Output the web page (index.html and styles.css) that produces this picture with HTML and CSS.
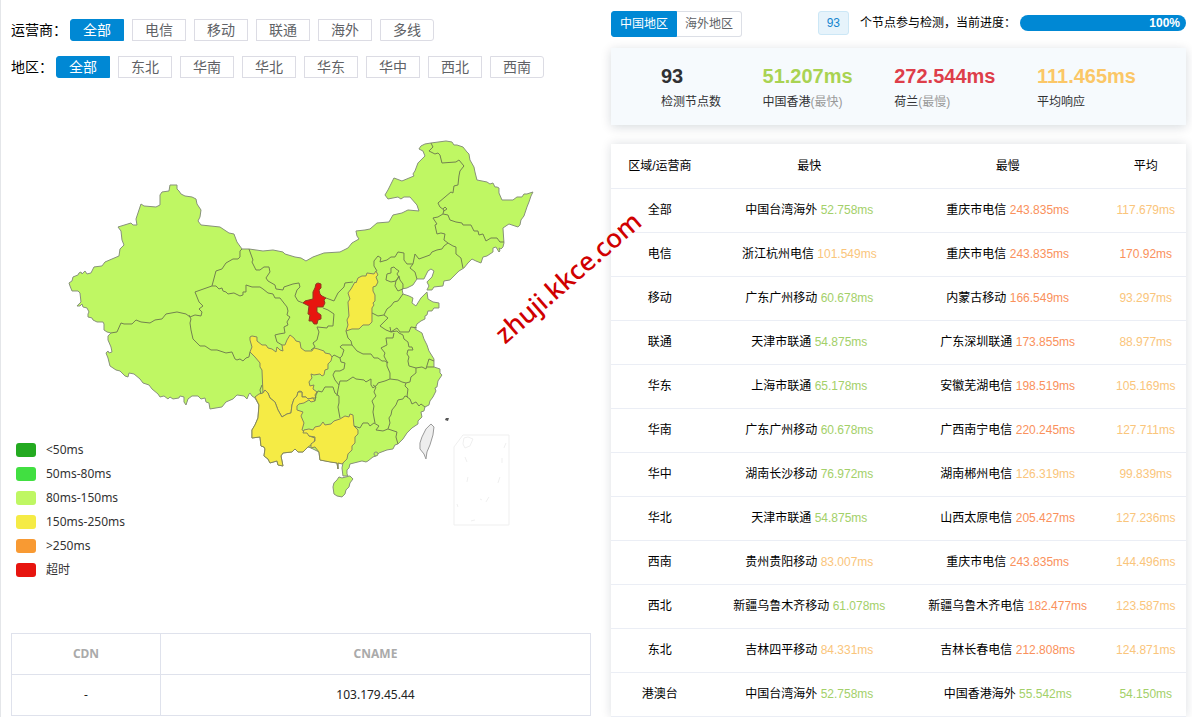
FILE: index.html
```html
<!DOCTYPE html>
<html lang="zh-CN">
<head>
<meta charset="utf-8">
<title>节点检测</title>
<link rel="stylesheet" href="styles.css">
</head>
<body>
<main class="page">
  <section class="left">
    <div class="filter"><span class="filter-label">运营商：</span>
      <div class="options"><button class="option active">全部</button><button class="option">电信</button><button class="option">移动</button><button class="option">联通</button><button class="option">海外</button><button class="option">多线</button></div>
    </div>
    <div class="filter"><span class="filter-label">地区：</span>
      <div class="options"><button class="option active">全部</button><button class="option">东北</button><button class="option">华南</button><button class="option">华北</button><button class="option">华东</button><button class="option">华中</button><button class="option">西北</button><button class="option">西南</button></div>
    </div>
    <div class="map">
      <svg class="map-svg" viewBox="11 78 580 555" role="img" aria-label="中国地图">
        <!-- mainland -->
        <path class="land" d="M69 283L72 281 73 277 78 275 79 273 81 272 82 274 85 271 87 274 91 273 94 267 102 266 105 262 119 256 120 249 122 247 124 245 122 240 121 231 118 227 131 223 133 225 137 225 136 219 141 204 144 206 156 207 160 205 160 195 162 192 169 191 170 185 177 185 177 189 179 191 181 194 185 196 192 197 196 199 197 204 201 210 200 217 198 221 201 225 220 227 229 233 234 234 237 242 242 249 249 249 263 251 273 250 283 252 285 254 295 257 301 258 306 261 313 257 324 253 340 252 348 248 352 243 359 239 357 236 356 231 365 230 370 229 377 223 389 222 393 215 402 213 408 210 419 211 417 205 410 197 404 197 401 199 398 197 393 198 388 199 385 195 388 190 394 178 402 181 414 176 413 174 415 171 418 163 421 160 425 156 423 151 419 149 421 146 425 144 431 143 446 141 452 142 454 145 457 145 463 147 467 152 469 154 470 160 474 167 475 172 477 180 487 182 490 184 493 183 495 187 497 187 499 188 499 193 502 200 513 200 517 197 522 197 524 194 527 194 533 192 531 196 529 202 527 207 524 216 521 220 520 225 518 227 509 224 503 228 504 243 503 247 501 249 499 248 500 251 499 252 496 247 493 248 493 252 487 256 483 257 481 263 476 261 472 259 468 263 464 268 459 271 450 280 444 281 443 286 434 287 432 290 427 290 429 286 427 282 432 277 434 271 431 269 428 271 424 279 417 279 413 285 407 288 402 289 403 294 409 296 413 298 412 303 416 306 421 298 427 292 428 299 433 302 439 303 439 308 434 308 432 311 428 311 427 315 425 316 425 319 421 321 417 324 415 329 422 333 424 339 427 345 429 351 434 359 434 367 440 369 440 373 442 375 438 381 437 387 435 388 436 391 433 397 430 401 429 405 425 407 424 411 421 412 422 417 418 421 418 424 412 428 407 433 403 439 398 444 395 445 393 449 387 450 379 453 376 456 373 457 368 461 366 462 362 461 350 464 349 468 347 470 347 474 348 476 343 476 342 468 343 463 338 463 338 469 337 463 320 460 319 452 311 448 308 447 303 452 298 452 295 449 292 452 283 453 281 456 283 466 278 465 277 461 270 463 268 459 264 456 265 449 264 447 261 446 260 437 252 438 252 430 255 425 258 418 259 405 255 398 252 396 250 393 249 394 247 399 244 396 237 395 233 399 226 402 222 407 210 409 209 403 206 402 205 398 201 399 198 396 192 396 188 399 186 405 184 402 184 397 180 396 179 398 173 399 170 397 168 399 164 396 160 397 158 394 152 389 149 385 143 383 140 379 134 374 129 373 128 377 125 376 120 371 116 370 110 366 108 358 106 353 108 351 109 353 112 352 111 347 108 340 108 336 111 333 107 332 104 330 104 324 103 322 97 322 93 320 92 318 88 317 88 314 89 312 87 308 83 307 82 304 80 306 77 306 81 302 80 293 78 291 72 291 70 286Z"/>
        <path class="land" d="M339 477L342 478 350 476 353 479 350 483 349 487 346 490 345 494 342 497 337 496 334 494 333 487 334 483 337 480Z"/>
        <!-- provinces in their own colour -->
        <path class="amber" d="M250 340L250 337 252 336 257 337 257 341 262 345 266 345 268 348 272 349 276 352 277 347 280 350 283 351 282 345 285 345 287 340 290 335 294 338 296 341 300 342 301 348 305 351 312 351 314 348 318 349 324 351 325 353 330 354 332 357 331 361 328 364 328 369 325 370 324 375 322 376 320 374 314 375 311 374 312 378 309 382 310 386 314 385 313 389 317 392 315 395 316 398 313 398 308 399 306 397 302 397 302 392 300 391 298 392 297 396 294 399 292 405 291 413 287 414 282 417 278 410 275 402 270 398 268 393 265 390 263 393 262 370 260 367 260 363 255 357 250 352 252 347Z"/>
        <path class="amber" d="M255 397L259 394 263 393 265 390 268 393 270 398 275 402 278 410 282 417 287 414 291 413 292 405 294 399 297 396 298 392 302 392 302 397 306 397 308 399 313 398 315 401 311 402 309 400 304 403 299 404 297 406 297 410 303 412 301 416 304 423 302 430 308 433 309 436 315 438 314 443 311 445 308 447 303 452 298 452 295 449 292 452 283 453 281 456 283 466 278 465 277 461 270 463 268 459 264 456 265 449 264 447 261 446 260 437 252 438 252 430 255 425 258 418 259 405Z"/>
        <path class="amber" d="M304 430L309 429 313 430 315 427 320 426 323 422 325 425 331 424 334 421 340 419 345 416 349 417 350 414 353 415 354 426 358 430 358 434 355 437 355 443 352 446 352 450 348 454 347 459 342 464 338 463 338 469 337 463 330 462 320 460 319 452 315 447 311 448 311 444 315 441 315 437 309 436 307 433 303 433Z"/>
        <path class="amber" d="M376 271L378 275 376 277 378 282 376 286 373 287 373 291 375 295 375 301 373 303 374 305 372 308 372 322 369 325 363 325 359 329 352 329 346 331 348 325 347 320 349 316 348 302 350 299 348 293 351 289 355 282 356 283 358 278 362 276 366 276 367 273 374 274Z"/>
        <path class="red" d="M318 283L321 284 321 288 319 290 320 294 322 296 326 298 324 300 325 303 323 307 317 307 317 312 321 315 321 319 318 320 317 324 314 324 312 321 309 321 310 315 308 314 309 306 303 303 305 301 313 299 313 292 315 288 316 284Z"/>
        <path class="tw" d="M431 424L434 427 433 435 430 445 427 452 426 459 424 454 420 449 420 443 422 437 426 429Z"/>
        <!-- borders -->
        <path class="border" d="M111 333L117 332 121 323 124 324 132 324 136 320 141 322 150 323 155 320 162 319 166 314 177 312 186 314 190 317 195 315 201 316 202 312 199 309 203 306 199 302 197 297 195 292 212 286M212 286L216 271 222 269 226 263 233 259 238 259 240 257 240 251 242 249M212 286L216 286 219 289 222 288 223 291 226 292 228 294 234 293 240 296 243 295 243 292 246 292 246 285 252 287 260 287 263 289 268 293 273 294 275 298 280 298 287 307 288 311 287 315 290 317 287 322 288 325 284 327 285 333 279 334 275 335 277 342 282 345M249 249L253 260 252 262 256 270 260 270 264 267 269 267 270 272 266 278 268 281 275 285 276 289 283 290 284 287 293 284 299 283 300 287 297 290 295 296 298 301 303 303M326 298L334 301 338 293 344 287 345 283 353 282M323 308L328 310 334 314 333 326 328 326 327 328 317 327 319 332 317 340 313 343 315 347 311 350M189 315L191 319 190 323 191 330 193 339 197 343 200 346 205 346 211 350 217 350 226 353 232 352 235 359 237 360 240 359 243 361 246 358 249 357 250 352M262 385L260 390 261 394M315 401L316 395 318 391 322 392 325 387 328 387 333 387 335 393 339 396 339 403 338 407 340 418M332 357L334 355 340 358 341 362 345 363 344 369 340 371 335 371 333 375 335 380 339 385 338 390 337 396M346 331L348 338 351 341 352 345 342 345 340 347 344 350 342 356 340 358M352 345L357 351 363 354 371 354 374 358 378 358 382 361 385 361 388 363M339 385L340 381 347 381 353 377 356 379 364 380 366 382 371 379 371 385 373 388 377 385 378 383 385 381 390 379 398 380 402 382 406 383M387 362L387 366 390 373 390 379M373 385L376 387 374 392 376 396 372 401 374 406 373 412 375 423M354 426L360 428 363 423 368 423 370 426 374 423 379 426 376 430 383 431 388 429 397 432 396 437 398 444M388 429L390 423 389 418 391 415 392 410 396 405 398 400 403 399 405 396 408 397M406 383L405 386 408 389 407 397 410 399 412 404 416 402 419 406 421 404 425 407M406 383L410 382 411 377 416 373 416 368 409 366 408 361 409 357 407 354 408 350 413 350 412 347 409 347 408 342 404 339 403 335 399 333 397 331 391 332 390 327M416 368L422 367 426 369 429 359 434 361M427 367L434 367M394 333L393 338 386 338 387 345 381 348 385 353 384 356 386 360 388 363M372 313L378 316 384 315 388 318 385 321 380 326 386 330 391 332 397 328 400 332 409 332 411 327 417 328M384 315L387 309 391 306 394 302 398 301 403 294M377 271L374 266 374 261 378 256 381 258 380 262 387 260 391 257 395 257 398 252 404 253 404 260 407 264 413 264 410 268 415 272 417 279M413 264L415 254 419 259 430 255 432 252 437 250 442 249 444 246 448 243 453 246 456 247 456 254 461 258 463 268M448 243L444 240 445 234 441 233 437 234 435 225 437 224 433 218 438 217 443 214 448 215 450 220 456 222 462 223 463 225 471 225 474 231 478 231 479 235 483 234 486 241 491 238 497 238 500 242 504 242M431 143L433 147 429 151 435 154 438 153 440 155 442 163 456 162 459 160 464 166 460 171 459 176 458 185 454 186 453 193 451 192 438 203 440 207 444 210 443 214M443 209L445 207 447 209 444 211M386 280L387 274 391 273 391 268 394 267 396 269 399 271 397 274 399 277 396 281 391 282ZM396 281L399 276 400 280 403 284 403 289 398 291 395 286Z"/>
        <circle class="land" cx="376" cy="454" r="2"/>
        <path class="islet" d="M445 420l1-2h3l-1 3z"/>
        <!-- South China Sea inset -->
        <path class="inset" d="M463 435H509V525H454V447ZM464 438L468 437 473 439 470 446 465 448 463 444ZM506 443l-2 5M465 457l2 5M502 458v5M468 477l-1 5M500 477l-2 6M489 497l-3 5M480 499l2 1M457 504l1 3M471 521l4-1"/>
      </svg>
      <ul class="legend">
        <li><span class="swatch s1"></span>&lt;50ms</li>
        <li><span class="swatch s2"></span>50ms-80ms</li>
        <li><span class="swatch s3"></span>80ms-150ms</li>
        <li><span class="swatch s4"></span>150ms-250ms</li>
        <li><span class="swatch s5"></span>&gt;250ms</li>
        <li><span class="swatch s6"></span>超时</li>
      </ul>
    </div>
    <table class="cdn">
      <thead><tr><th class="cdn-col">CDN</th><th>CNAME</th></tr></thead>
      <tbody><tr><td>-</td><td>103.179.45.44</td></tr></tbody>
    </table>
  </section>
  <section class="right">
    <div class="topbar">
      <div class="tabs"><button class="tab on">中国地区</button><button class="tab">海外地区</button></div>
      <div class="status"><span class="badge">93</span><span class="status-text">个节点参与检测，当前进度：</span><div class="progress">100%</div></div>
    </div>
    <div class="stats">
      <div><strong>93</strong><p>检测节点数</p></div>
      <div><strong class="fast">51.207ms</strong><p>中国香港<span>(最快)</span></p></div>
      <div><strong class="slow">272.544ms</strong><p>荷兰<span>(最慢)</span></p></div>
      <div><strong class="avg">111.465ms</strong><p>平均响应</p></div>
    </div>
    <table class="results">
      <thead><tr><th class="c1">区域/运营商</th><th class="c2">最快</th><th class="c3">最慢</th><th class="c4">平均</th></tr></thead>
      <tbody>
        <tr><td>全部</td><td>中国台湾海外 <span class="g">52.758ms</span></td><td>重庆市电信 <span class="o">243.835ms</span></td><td class="y">117.679ms</td></tr>
        <tr><td>电信</td><td>浙江杭州电信 <span class="y">101.549ms</span></td><td>重庆市电信 <span class="o">243.835ms</span></td><td class="o">170.92ms</td></tr>
        <tr><td>移动</td><td>广东广州移动 <span class="g">60.678ms</span></td><td>内蒙古移动 <span class="o">166.549ms</span></td><td class="y">93.297ms</td></tr>
        <tr><td>联通</td><td>天津市联通 <span class="g">54.875ms</span></td><td>广东深圳联通 <span class="o">173.855ms</span></td><td class="y">88.977ms</td></tr>
        <tr><td>华东</td><td>上海市联通 <span class="g">65.178ms</span></td><td>安徽芜湖电信 <span class="o">198.519ms</span></td><td class="y">105.169ms</td></tr>
        <tr><td>华南</td><td>广东广州移动 <span class="g">60.678ms</span></td><td>广西南宁电信 <span class="o">220.245ms</span></td><td class="y">127.711ms</td></tr>
        <tr><td>华中</td><td>湖南长沙移动 <span class="g">76.972ms</span></td><td>湖南郴州电信 <span class="y">126.319ms</span></td><td class="y">99.839ms</td></tr>
        <tr><td>华北</td><td>天津市联通 <span class="g">54.875ms</span></td><td>山西太原电信 <span class="o">205.427ms</span></td><td class="y">127.236ms</td></tr>
        <tr><td>西南</td><td>贵州贵阳移动 <span class="y">83.007ms</span></td><td>重庆市电信 <span class="o">243.835ms</span></td><td class="y">144.496ms</td></tr>
        <tr><td>西北</td><td>新疆乌鲁木齐移动 <span class="g">61.078ms</span></td><td>新疆乌鲁木齐电信 <span class="o">182.477ms</span></td><td class="y">123.587ms</td></tr>
        <tr><td>东北</td><td>吉林四平移动 <span class="y">84.331ms</span></td><td>吉林长春电信 <span class="o">212.808ms</span></td><td class="y">124.871ms</td></tr>
        <tr><td>港澳台</td><td>中国台湾海外 <span class="g">52.758ms</span></td><td>中国香港海外 <span class="g">55.542ms</span></td><td class="g">54.150ms</td></tr>
      </tbody>
    </table>
  </section>
  <div class="watermark">zhuji.kkce.com</div>
</main>
</body>
</html>
```
FILE: styles.css
```css
* { box-sizing: border-box; }
body {
  margin: 0;
  background: #fff;
  color: #000;
  font: 12px/16px "Liberation Sans", "Noto Sans CJK SC", sans-serif;
}
button { font: inherit; margin: 0; cursor: pointer; }
p, ul { margin: 0; padding: 0; }
.page {
  position: relative;
  display: grid;
  grid-template-columns: 50.5% minmax(0, 1fr);
}
.left {
  display: flex;
  flex-direction: column;
  padding: 19px 11px 0 10px;
  border-left: 1px solid #e4e6e9;
}
.filter { display: flex; align-items: center; gap: 3px; margin-bottom: 15px; }
.filter + .filter { margin-bottom: 0; }
.filter-label { font-size: 14px; line-height: 20px; }
.options { display: flex; gap: 8px; }
.option {
  width: 54px;
  height: 22px;
  padding: 0;
  font-size: 14px;
  line-height: 20px;
  color: #606266;
  background: #fff;
  border: 1px solid #dcdce4;
}
.option:first-child { border-radius: 3px 0 0 3px; }
.option:last-child { border-radius: 0 3px 3px 0; }
.option.active { color: #fff; background: #0088d4; border-color: #0088d4; }
.map { position: relative; }
.map-svg { display: block; width: 100%; height: auto; }
.land { fill: #bff763; stroke: #879179; stroke-width: 1; stroke-linejoin: round; }
.amber { fill: #f5eb45; stroke: #85875c; stroke-width: 1; stroke-linejoin: round; }
.red { fill: #e7150f; stroke: #8c3a22; stroke-width: 1; }
.tw { fill: #eee; stroke: #999; }
.border { fill: none; stroke: #71814f; stroke-width: 1; stroke-linejoin: round; }
.islet { fill: #555; }
.inset { fill: none; stroke: #efefef; }
.legend {
  position: absolute;
  left: 5px;
  bottom: 51px;
  list-style: none;
  color: #333;
  font-family: "Noto Sans", "Noto Sans CJK SC", sans-serif;
}
.legend li { display: flex; align-items: center; gap: 10px; height: 24px; }
.swatch { width: 20px; height: 14px; border-radius: 3px; }
.s1 { background: #23aa20; }
.s2 { background: #41df41; }
.s3 { background: #bff763; }
.s4 { background: #f5eb45; }
.s5 { background: #f89a33; }
.s6 { background: #e7150f; }
.cdn { width: 100%; table-layout: fixed; border-collapse: collapse; font-family: "Noto Sans", sans-serif; }
.cdn th, .cdn td { height: 41px; padding: 0; text-align: center; border: 1px solid #dfe2ec; }
.cdn th { color: #aaa; }
.cdn td { color: #222; }
.cdn-col { width: 149px; }
.right { padding: 11px 6px 0 9px; }
.topbar { display: flex; justify-content: space-between; height: 26px; margin-bottom: 11px; }
.tabs { display: flex; }
.tab {
  padding: 0 8px;
  color: #606266;
  background: #fff;
  border: 1px solid #dcdfe6;
  border-left: 0;
  border-radius: 0 3px 3px 0;
}
.tab.on { color: #fff; background: #0088d4; border-color: #0088d4; border-left: 1px solid #0088d4; border-radius: 3px 0 0 3px; }
.status { display: flex; align-items: center; height: 24px; }
.badge {
  margin-right: 11px;
  padding: 3px 8px;
  color: #1485cf;
  background: #e6f3fb;
  border: 1px solid #cce7f6;
  border-radius: 3px;
}
.status-text { margin-right: 4px; }
.progress {
  width: 166px;
  height: 16px;
  padding-right: 6px;
  border-radius: 8px;
  background: #0088d4;
  color: #fff;
  font-weight: bold;
  text-align: right;
}
.stats {
  display: flex;
  justify-content: space-between;
  padding: 16px 50px 15px;
  margin-bottom: 19px;
  background: #f6fafd;
  color: #303133;
  box-shadow: 0 2px 10px rgba(0, 30, 50, .16);
}
.stats strong { display: block; font-size: 20px; line-height: 24px; margin-bottom: 6px; }
.stats span { color: #999; }
.stats .fast { color: #a9d352; }
.stats .slow { color: #de3e4a; }
.stats .avg { color: #fbc767; }
.results {
  width: 100%;
  table-layout: fixed;
  border-collapse: collapse;
  box-shadow: 0 0 10px rgba(0, 30, 50, .14);
}
.results th, .results td { height: 44px; padding: 0; font-weight: normal; text-align: center; white-space: nowrap; border-bottom: 1px solid #ebeef5; }
.c1 { width: 17%; }
.c2 { width: 35%; }
.c3 { width: 34%; }
.c4 { width: 14%; }
.results .g { color: #a3d069; }
.results .y { color: #fac57b; }
.results .o { color: #fa915c; }
.watermark {
  position: absolute;
  left: 476px;
  top: 260px;
  color: #d00000;
  font: 500 26px/34px "Noto Sans", sans-serif;
  transform: rotate(-41deg);
}
```
